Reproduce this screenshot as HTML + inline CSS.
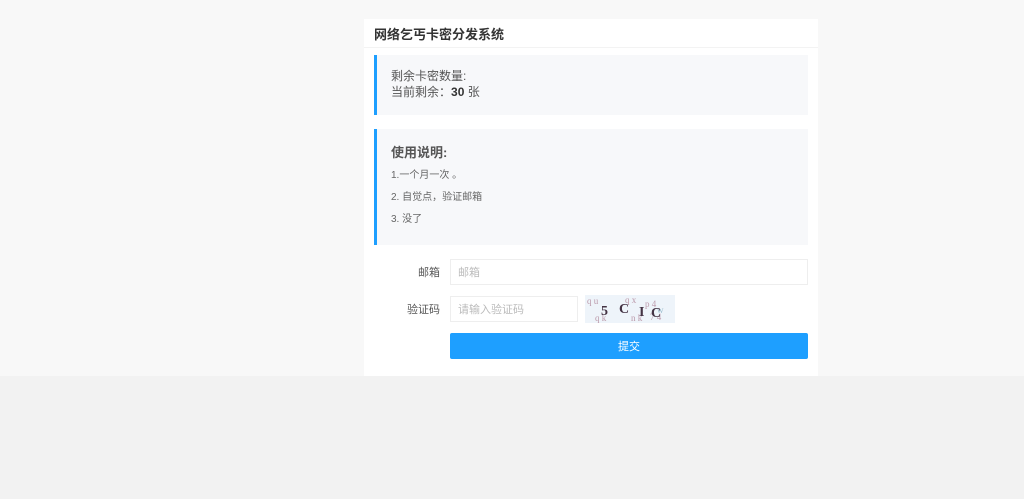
<!DOCTYPE html><html><head><meta charset="utf-8"><style>
*{margin:0;padding:0;box-sizing:border-box}
body{width:1024px;height:499px;background:#f2f2f2;font-family:"Liberation Sans","Noto Sans CJK SC",sans-serif;position:relative;overflow:hidden}
.top{position:absolute;left:0;top:0;width:1024px;height:376px;background:#f8f8f8}
.card{position:absolute;left:364px;top:19px;width:454px;height:357px;background:#fff}
.title{position:absolute;left:10px;top:5px;font-size:13px;font-weight:bold;color:#333}
.hr{position:absolute;left:0;top:28px;width:454px;height:1px;background:#f3f3f3}
.box{position:absolute;left:10px;width:434px;background:#f7f8fa;border-left:3px solid #1e9fff;color:#555}
.lbl{position:absolute;font-size:11px;color:#555;text-align:right;width:60px}
.inp{position:absolute;border:1px solid #eee;background:#fff;font-size:11px;color:#bbb;padding:0 7px;line-height:26px}
</style></head><body>
<div class="top"></div>
<div class="card">
<div class="title">网络乞丐卡密分发系统</div>
<div class="hr"></div>
<div class="box" style="top:36px;height:60px">
<div style="position:absolute;left:14px;top:13px;font-size:12px;line-height:16px">剩余卡密数量:<br>当前剩余：<b style="color:#333">30</b> 张</div>
</div>
<div class="box" style="top:110px;height:116px">
<div style="position:absolute;left:14px;top:13px;font-size:13px;font-weight:bold">使用说明:</div>
<div style="position:absolute;left:14px;top:37px;font-size:10px;color:#666">1.一个月一次 。</div>
<div style="position:absolute;left:14px;top:59px;font-size:10px;color:#666">2. 自觉点，验证邮箱</div>
<div style="position:absolute;left:14px;top:81px;font-size:10px;color:#666">3. 没了</div>
</div>
<div class="lbl" style="left:16px;top:245px">邮箱</div>
<div class="inp" style="left:86px;top:240px;width:358px;height:26px">邮箱</div>
<div class="lbl" style="left:16px;top:282px">验证码</div>
<div class="inp" style="left:86px;top:277px;width:128px;height:26px">请输入验证码</div>
<svg style="position:absolute;left:221px;top:276px" width="90" height="28">
<rect width="90" height="28" fill="#eef4fa"/>
<g font-size="9" fill="#b9a" font-family="Liberation Serif"><text x="2" y="9">q u</text><text x="40" y="8">q x</text><text x="60" y="12">p 4</text><text x="10" y="26">q k</text><text x="46" y="26">n k</text><text x="65" y="25">7 4</text><text x="72" y="18" fill="#9bc">w</text></g>
<g font-size="14" font-weight="bold" fill="#434" font-family="Liberation Serif"><text x="16" y="20">5</text><text x="34" y="18">C</text><text x="54" y="21">I</text><text x="66" y="22">C</text></g>
</svg>
<div style="position:absolute;left:86px;top:314px;width:358px;height:26px;background:#1e9fff;color:#fff;font-size:11px;text-align:center;line-height:28px;border-radius:2px">提交</div>
</div>
</body></html>
